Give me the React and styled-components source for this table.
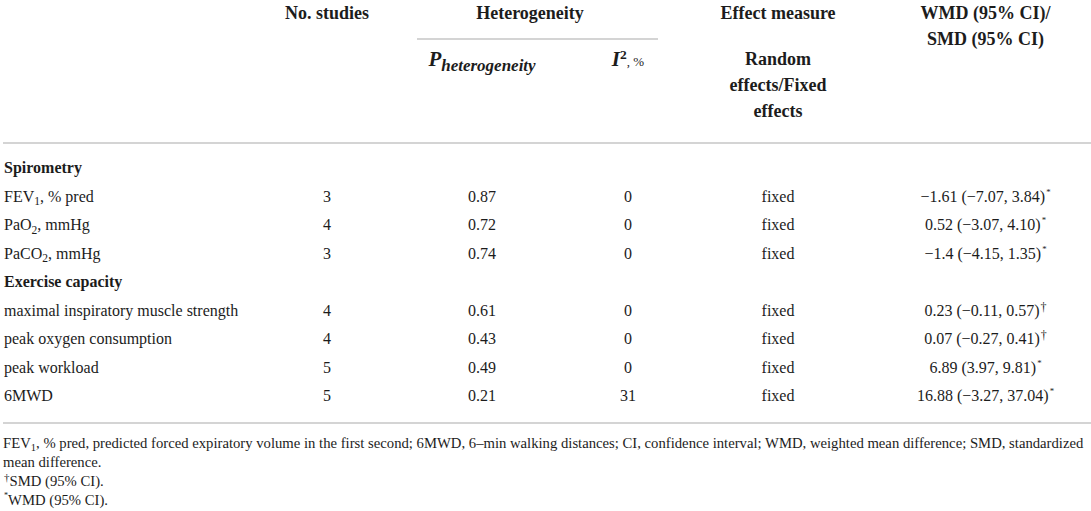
import React from "react";
import styled, { createGlobalStyle } from "styled-components";

const Global = createGlobalStyle`
  html, body { margin: 0; padding: 0; background: #fff; }
  body { font-family: "Liberation Serif", "Times New Roman", serif; color: #1c1c1c; }
`;

const COLS = "267px 114px 196px 96px 204px 211px";

const Table = styled.div`
  margin-left: 3px;
  width: 1088px;
`;

const Head = styled.div`
  display: grid;
  grid-template-columns: ${COLS};
  grid-template-rows: auto auto;
  padding-bottom: 18px;
  border-bottom: 2px solid #d4d4d4;
  font-size: 18px;
  font-weight: bold;
  line-height: 26px;
  text-align: center;
`;

const HeadCell = styled.div`
  grid-column: ${(p) => p.$col};
  grid-row: ${(p) => p.$row};
  padding-top: ${(p) => (p.$sub ? "6px" : "0")};
  white-space: nowrap;
`;

const Rule = styled.div`
  height: 2px;
  background: #d4d4d4;
  margin: 12px 18px 0 33px;
`;

const Italic = styled.span`
  font-style: italic;
  font-size: 21px;
`;

const Sub = styled.span`
  font-size: ${(p) => p.$size || "0.72em"};
  line-height: 1;
  position: relative;
  top: 0.3em;
`;

const Sup = styled.span`
  font-size: 0.75em;
  vertical-align: 0.5em;
  line-height: 0;
`;

const Unit = styled.span`
  font-size: 13px;
  font-weight: normal;
  font-style: normal;
`;

const Body = styled.div`
  padding: 10px 0 11px;
  border-bottom: 2px solid #d4d4d4;
  font-size: 16px;
`;

const Row = styled.div`
  display: grid;
  grid-template-columns: ${COLS};
  height: 28.5px;
  align-items: center;
  font-weight: ${(p) => (p.$section ? "bold" : "normal")};
`;

const Cell = styled.div`
  text-align: ${(p) => (p.$left ? "left" : "center")};
  padding-left: ${(p) => (p.$left ? "1px" : "0")};
  white-space: nowrap;
`;

const Mark = styled.span`
  font-size: ${(p) => (p.$dagger ? "0.75em" : "0.55em")};
  vertical-align: ${(p) => (p.$dagger ? "0.4em" : "0.8em")};
  line-height: 0;
  margin-left: 1px;
`;

const Notes = styled.div`
  padding-top: 10px;
  font-size: 14.7px;
  line-height: 19px;
`;

const Note = styled.div``;

const rows = [
  { section: "Spirometry" },
  { label: <>FEV<Sub>1</Sub>, % pred</>, n: "3", p: "0.87", i: "0", m: "fixed", est: "−1.61 (−7.07, 3.84)", mark: "*" },
  { label: <>PaO<Sub>2</Sub>, mmHg</>, n: "4", p: "0.72", i: "0", m: "fixed", est: "0.52 (−3.07, 4.10)", mark: "*" },
  { label: <>PaCO<Sub>2</Sub>, mmHg</>, n: "3", p: "0.74", i: "0", m: "fixed", est: "−1.4 (−4.15, 1.35)", mark: "*" },
  { section: "Exercise capacity" },
  { label: "maximal inspiratory muscle strength", n: "4", p: "0.61", i: "0", m: "fixed", est: "0.23 (−0.11, 0.57)", mark: "†" },
  { label: "peak oxygen consumption", n: "4", p: "0.43", i: "0", m: "fixed", est: "0.07 (−0.27, 0.41)", mark: "†" },
  { label: "peak workload", n: "5", p: "0.49", i: "0", m: "fixed", est: "6.89 (3.97, 9.81)", mark: "*" },
  { label: "6MWD", n: "5", p: "0.21", i: "31", m: "fixed", est: "16.88 (−3.27, 37.04)", mark: "*" },
];

export default function App() {
  return (
    <>
      <Global />
      <Table>
        <Head>
          <HeadCell $col="2" $row="1">No. studies</HeadCell>
          <HeadCell $col="3 / 5" $row="1">
            Heterogeneity
            <Rule />
          </HeadCell>
          <HeadCell $col="5" $row="1">Effect measure</HeadCell>
          <HeadCell $col="6" $row="1 / 3">
            WMD (95% CI)/
            <br />
            SMD (95% CI)
          </HeadCell>
          <HeadCell $col="3" $row="2" $sub>
            <Italic>
              P<Sub $size="17px">heterogeneity</Sub>
            </Italic>
          </HeadCell>
          <HeadCell $col="4" $row="2" $sub>
            <Italic>I</Italic>
            <Sup>2</Sup>
            <Unit>, %</Unit>
          </HeadCell>
          <HeadCell $col="5" $row="2" $sub>
            Random
            <br />
            effects/Fixed
            <br />
            effects
          </HeadCell>
        </Head>
        <Body>
          {rows.map((r, k) =>
            r.section ? (
              <Row key={k} $section>
                <Cell $left>{r.section}</Cell>
              </Row>
            ) : (
              <Row key={k}>
                <Cell $left>{r.label}</Cell>
                <Cell>{r.n}</Cell>
                <Cell>{r.p}</Cell>
                <Cell>{r.i}</Cell>
                <Cell>{r.m}</Cell>
                <Cell>
                  {r.est}
                  <Mark $dagger={r.mark === "†"}>{r.mark}</Mark>
                </Cell>
              </Row>
            )
          )}
        </Body>
        <Notes>
          <Note>
            FEV<Sub>1</Sub>, % pred, predicted forced expiratory volume in the first second; 6MWD, 6–min walking
            distances; CI, confidence interval; WMD, weighted mean difference; SMD, standardized mean difference.
          </Note>
          <Note>
            <Mark $dagger>†</Mark>SMD (95% CI).
          </Note>
          <Note>
            <Mark>*</Mark>WMD (95% CI).
          </Note>
        </Notes>
      </Table>
    </>
  );
}
